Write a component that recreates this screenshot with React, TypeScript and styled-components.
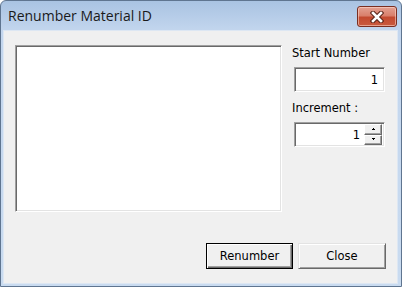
import React from "react";
import styled, { createGlobalStyle } from "styled-components";

const Global = createGlobalStyle`
  html, body { margin: 0; padding: 0; background: #ffffff; }
  body { width: 402px; height: 287px; overflow: hidden; }
`;

const Window = styled.div`
  box-sizing: border-box;
  width: 402px;
  height: 287px;
  border: 1px solid #5f7590;
  border-radius: 6px 6px 0 0;
  background: linear-gradient(#a9c3e2 0px, #c3d6ee 30px, #c9dbf0 100%);
  display: flex;
  flex-direction: column;
  padding: 0 3px 2px 2px;
`;

const TitleBar = styled.div`
  height: 29px;
  display: flex;
  align-items: flex-start;
  justify-content: space-between;
  flex: none;
`;

const Title = styled.span`
  font-family: "Open Sans", "Noto Sans", sans-serif;
  font-size: 14px;
  color: #1a1a1a;
  margin: 6px 0 0 5px;
  line-height: 18px;
`;

const CloseBtn = styled.div`
  box-sizing: border-box;
  width: 40px;
  height: 21px;
  margin: 5px 1px 0 0;
  border: 1px solid #7a2f22;
  border-radius: 3px;
  background: linear-gradient(#e3a192 0%, #d9806c 45%, #c34a30 55%, #c95a3e 100%);
  box-shadow: inset 0 0 0 1px rgba(255, 220, 210, 0.55);
  display: flex;
  align-items: center;
  justify-content: center;
`;

const Content = styled.div`
  flex: 1;
  box-sizing: border-box;
  background: #f0f0f0;
  border: 1px solid #dde7f3;
  display: flex;
  flex-direction: column;
`;

const TopRow = styled.div`
  display: flex;
  padding: 13px 0 0 10px;
`;

const ListBox = styled.div`
  box-sizing: border-box;
  width: 267px;
  height: 167px;
  background: #ffffff;
  border-style: solid;
  border-width: 1px;
  border-color: #a0a0a0 #ffffff #ffffff #a0a0a0;
  box-shadow: inset 1px 1px 0 #696969, inset -1px -1px 0 #e3e3e3;
  margin: 1px 0 0 1px;
`;

const Side = styled.div`
  display: flex;
  flex-direction: column;
  margin-left: 10px;
`;

const Label = styled.div<{ $top: number }>`
  font-family: "DejaVu Sans", sans-serif;
  font-size: 11.5px;
  line-height: 13px;
  color: #000;
  margin-top: ${(p) => p.$top}px;
`;

const Field = styled.div`
  box-sizing: border-box;
  width: 91px;
  height: 25px;
  margin: 7px 0 0 2px;
  background: #ffffff;
  border-style: solid;
  border-width: 1px;
  border-color: #a0a0a0 #ffffff #ffffff #a0a0a0;
  box-shadow: inset 1px 1px 0 #696969, inset -1px -1px 0 #e3e3e3;
  display: flex;
  align-items: center;
  padding: 1px 2px 1px 1px;
  font-family: "DejaVu Sans", sans-serif;
  font-size: 11.5px;
  color: #000;
`;

const Value = styled.span`
  flex: 1;
  text-align: right;
  padding-right: 4px;
`;

const Spin = styled.div`
  display: flex;
  flex-direction: column;
  width: 18px;
  height: 21px;
`;

const SpinBtn = styled.div`
  box-sizing: border-box;
  flex: 1;
  background: #f0f0f0;
  border-style: solid;
  border-width: 1px;
  border-color: #ffffff #696969 #696969 #ffffff;
  box-shadow: inset -1px -1px 0 #a0a0a0;
  display: flex;
  align-items: center;
  justify-content: center;
`;

const Spacer = styled.div`
  flex: 1;
`;

const ButtonRow = styled.div`
  display: flex;
  justify-content: flex-end;
  gap: 5px;
  padding: 0 11px 14px 0;
`;

const Button = styled.div`
  box-sizing: border-box;
  width: 87px;
  height: 26px;
  background: #f0f0f0;
  border: 1px solid #000000;
  box-shadow: inset 1px 1px 0 #ffffff, inset -1px -1px 0 #696969, inset -2px -2px 0 #a0a0a0;
  display: flex;
  align-items: center;
  justify-content: center;
  font-family: "DejaVu Sans", sans-serif;
  font-size: 11.5px;
  color: #000;
  padding-bottom: 1px;
`;

const CloseButton = styled(Button)`
  width: 88px;
  border-color: #e3e3e3 #696969 #696969 #e3e3e3;
  box-shadow: inset 1px 1px 0 #ffffff, inset -1px -1px 0 #a0a0a0;
`;

const Up = () => (
  <svg width="5" height="3" viewBox="0 0 5 3">
    <path d="M2 0h1v1h1v1H1V1h1z" fill="#000" />
  </svg>
);
const Down = () => (
  <svg width="5" height="3" viewBox="0 0 5 3">
    <path d="M1 0h3v1H3v1H2V1H1z" fill="#000" />
  </svg>
);

const XIcon = () => (
  <svg width="14" height="12" viewBox="0 0 14 12">
    <path d="M3 2 L11 10 M11 2 L3 10" stroke="#5a2418" strokeWidth="4.6" strokeLinecap="square" />
    <path d="M3 2 L11 10 M11 2 L3 10" stroke="#ffffff" strokeWidth="2.6" strokeLinecap="square" />
  </svg>
);

export default function App() {
  return (
    <>
      <Global />
      <Window>
        <TitleBar>
          <Title>Renumber Material ID</Title>
          <CloseBtn>
            <XIcon />
          </CloseBtn>
        </TitleBar>
        <Content>
          <TopRow>
            <ListBox />
            <Side>
              <Label $top={3}>Start Number</Label>
              <Field>
                <Value>1</Value>
              </Field>
              <Label $top={10}>Increment :</Label>
              <Field>
                <Value>1</Value>
                <Spin>
                  <SpinBtn>
                    <Up />
                  </SpinBtn>
                  <SpinBtn>
                    <Down />
                  </SpinBtn>
                </Spin>
              </Field>
            </Side>
          </TopRow>
          <Spacer />
          <ButtonRow>
            <Button>Renumber</Button>
            <CloseButton>Close</CloseButton>
          </ButtonRow>
        </Content>
      </Window>
    </>
  );
}
